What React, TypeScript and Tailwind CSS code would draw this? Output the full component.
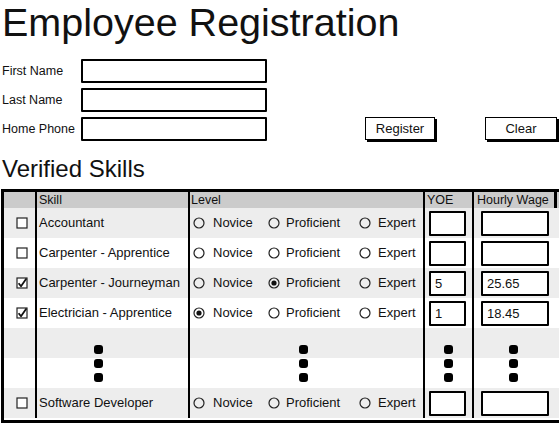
import React from "react";

type Level = "Novice" | "Proficient" | "Expert" | null;

type SkillRow = {
  skill: string;
  checked: boolean;
  level: Level;
  yoe: string;
  wage: string;
};

const skills: SkillRow[] = [
  { skill: "Accountant", checked: false, level: null, yoe: "", wage: "" },
  { skill: "Carpenter - Apprentice", checked: false, level: null, yoe: "", wage: "" },
  { skill: "Carpenter - Journeyman", checked: true, level: "Proficient", yoe: "5", wage: "25.65" },
  { skill: "Electrician - Apprentice", checked: true, level: "Novice", yoe: "1", wage: "18.45" },
];

const lastRow: SkillRow = { skill: "Software Developer", checked: false, level: null, yoe: "", wage: "" };

function Checkbox({ checked }: { checked: boolean }) {
  return (
    <svg width="12" height="12" viewBox="0 0 12 12" className="block">
      <rect x="1" y="1" width="10" height="10" fill="white" stroke="#222" strokeWidth="1.2" />
      {checked && (
        <path d="M2.6 6.2 L5 9.2 L10.4 1.6" fill="none" stroke="#111" strokeWidth="1.8" strokeLinejoin="round" />
      )}
    </svg>
  );
}

function Radio({ on }: { on: boolean }) {
  return (
    <svg width="12" height="12" viewBox="0 0 12 12" className="block shrink-0">
      <circle cx="6" cy="6" r="5" fill="none" stroke="#222" strokeWidth="1.2" />
      {on && <circle cx="6" cy="6" r="2.6" fill="#111" />}
    </svg>
  );
}

function LevelPicker({ level }: { level: Level }) {
  return (
    <div className="flex items-center pl-[3px] text-[13px]">
      <div className="flex w-[75px] items-center gap-[8px]">
        <Radio on={level === "Novice"} />
        <span>Novice</span>
      </div>
      <div className="flex w-[91px] items-center gap-[6px]">
        <Radio on={level === "Proficient"} />
        <span>Proficient</span>
      </div>
      <div className="flex items-center gap-[7px]">
        <Radio on={level === "Expert"} />
        <span>Expert</span>
      </div>
    </div>
  );
}

function Box({ value, width }: { value: string; width: string }) {
  return (
    <div className={`h-[25px] ${width} border-2 border-black bg-white pl-[4px] text-[13px] leading-[21px] rounded-[1px]`}>
      {value}
    </div>
  );
}

function Dots() {
  return (
    <div className="flex flex-col gap-[5px]">
      <div className="h-[9px] w-[9px] rounded-[3px] bg-black" />
      <div className="h-[9px] w-[9px] rounded-[3px] bg-black" />
      <div className="h-[9px] w-[9px] rounded-[3px] bg-black" />
    </div>
  );
}

function Row({ row, gray }: { row: SkillRow; gray: boolean }) {
  return (
    <div className={`flex h-[30px] ${gray ? "bg-[#ededed]" : "bg-white"}`}>
      <div className="flex w-[31px] items-center pl-[12px]">
        <Checkbox checked={row.checked} />
      </div>
      <div className="flex w-[153px] items-center border-l-2 border-black pl-[2px] text-[13px]">
        {row.skill}
      </div>
      <div className="flex w-[235px] items-center border-l-2 border-black">
        <LevelPicker level={row.level} />
      </div>
      <div className="flex w-[49px] items-center border-l-2 border-black pl-[4px]">
        <Box value={row.yoe} width="w-[37px]" />
      </div>
      <div className="flex flex-1 items-center border-l-2 border-black pl-[7px]">
        <Box value={row.wage} width="w-[68px]" />
      </div>
    </div>
  );
}

function Field({ label }: { label: string }) {
  return (
    <div className="flex h-[24px] items-center">
      <div className="w-[81px] pl-[2px] text-[12.5px]">{label}</div>
      <div className="h-[24px] w-[186px] border-2 border-black bg-white rounded-[1px]" />
    </div>
  );
}

export default function App() {
  return (
    <div className="relative h-[424px] w-[559px] overflow-hidden bg-white text-[#111] font-['Liberation_Sans',Arial,sans-serif]">
      <h1 className="pl-[2px] text-[39.5px] leading-[44px]">Employee Registration</h1>

      {/* Form */}
      <div className="mt-[15px] flex flex-col gap-[5px]">
        <Field label="First Name" />
        <Field label="Last Name" />
        <div className="flex h-[24px] items-center">
          <div className="w-[81px] pl-[2px] text-[12.5px]">Home Phone</div>
          <div className="h-[24px] w-[186px] border-2 border-black bg-white rounded-[1px]" />
          <button className="ml-[98px] h-[23px] w-[70px] self-start border border-black bg-white text-[13px] shadow-[2px_2px_0_#000]">
            Register
          </button>
          <button className="ml-[50px] h-[23px] w-[72px] self-start border border-black bg-white text-[13px] shadow-[2px_2px_0_#000]">
            Clear
          </button>
        </div>
      </div>

      <h2 className="mt-[14px] pl-[2px] text-[24px] leading-[28px]">Verified Skills</h2>

      {/* Skills table */}
      <div className="ml-[1px] mt-[6px] border-b-[3px] border-l-[3px] border-t-[3px] border-black pb-[2px]">
        <div className="flex h-[16px] bg-[#cbcbcb] text-[12.5px] leading-[16px]">
          <div className="w-[31px]" />
          <div className="w-[153px] border-l-2 border-black pl-[2px]">Skill</div>
          <div className="w-[235px] border-l-2 border-black pl-[1px]">Level</div>
          <div className="w-[49px] border-l-2 border-black pl-[2px]">YOE</div>
          <div className="mr-[2px] flex-1 border-l-2 border-r-[3px] border-black pl-[3px]">Hourly Wage</div>
        </div>

        {skills.map((row, i) => (
          <Row key={row.skill} row={row} gray={i % 2 === 0} />
        ))}

        {/* Ellipsis rows */}
        <div className="flex h-[60px] bg-[linear-gradient(to_bottom,#ededed_50%,#ffffff_50%)]">
          <div className="w-[31px]" />
          <div className="w-[153px] border-l-2 border-black pl-[57px] pt-[17px]">
            <Dots />
          </div>
          <div className="w-[235px] border-l-2 border-black pl-[109px] pt-[17px]">
            <Dots />
          </div>
          <div className="w-[49px] border-l-2 border-black pl-[19px] pt-[17px]">
            <Dots />
          </div>
          <div className="flex-1 border-l-2 border-black pl-[35px] pt-[17px]">
            <Dots />
          </div>
        </div>

        <Row row={lastRow} gray />
      </div>
    </div>
  );
}
